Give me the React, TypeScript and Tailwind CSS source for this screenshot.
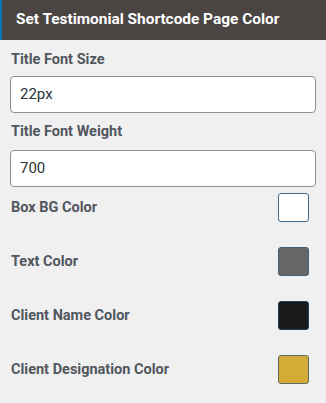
import React from "react";

const rows = [
  { label: "Box BG Color", color: "bg-[#ffffff]", border: "border-[#3f6a8f]" },
  { label: "Text Color", color: "bg-[#666666]", border: "border-[#3f5f7a]" },
  { label: "Client Name Color", color: "bg-[#17191b]", border: "border-[#1f3f5f]" },
  { label: "Client Designation Color", color: "bg-[#d4ab36]", border: "border-[#5d6b62]" },
];

export default function App() {
  return (
    <div className="w-[326px] h-[403px] bg-[#f0f0f0] overflow-hidden" style={{ fontFamily: "Roboto, 'Liberation Sans', sans-serif" }}>
      <div className="h-[40px] bg-[#4a4543] border-l-2 border-[#0a74b8] flex items-center pl-[14px]">
        <span className="text-white font-bold text-[15.4px] leading-none">Set Testimonial Shortcode Page Color</span>
      </div>
      <div className="px-[10px]">
        <div className="mt-[10px] h-[20px] leading-[20px] text-[14.5px] font-bold text-[#50575e] pl-px">Title Font Size</div>
        <div className="mt-[6px] h-[37px] bg-white border border-[#8c8f94] rounded-[4px] flex items-center px-[9px] text-[15px] text-[#2c3338]">22px</div>
        <div className="mt-[9px] h-[20px] leading-[20px] text-[14.5px] font-bold text-[#50575e] pl-px">Title Font Weight</div>
        <div className="mt-[8px] h-[37px] bg-white border border-[#8c8f94] rounded-[4px] flex items-center px-[9px] text-[15px] text-[#2c3338]">700</div>
        <div className="mt-[6px] flex flex-col gap-[25px]">
          {rows.map((r) => (
            <div key={r.label} className="h-[29px] flex items-center justify-between">
              <span className="text-[14.5px] font-bold text-[#50575e] pl-px">{r.label}</span>
              <div className={`w-[31px] h-[29px] mr-[7px] rounded-[3px] border ${r.color} ${r.border}`} />
            </div>
          ))}
        </div>
      </div>
    </div>
  );
}
